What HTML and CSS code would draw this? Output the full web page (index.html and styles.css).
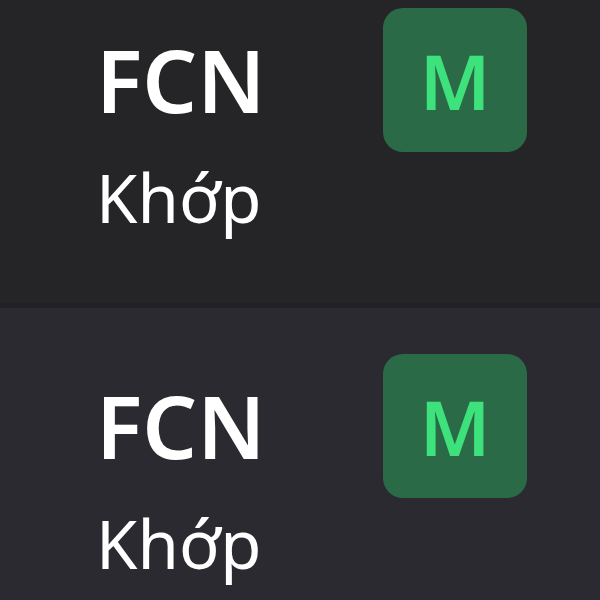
FILE: index.html
```html
<!DOCTYPE html>
<html lang="vi">

<head>
    <meta charset="UTF-8">
    <meta name="viewport" content="width=device-width, initial-scale=1.0">
    <title>Lệnh khớp</title>
    <link rel="stylesheet" href="styles.css">
</head>

<body>
    <div class="order-list">
        <div class="order-row">
            <div class="order-info">
                <div class="symbol">FCN</div>
                <div class="status">Khớp</div>
            </div>
            <div class="side-badge">M</div>
        </div>
        <div class="order-row alt">
            <div class="order-info">
                <div class="symbol">FCN</div>
                <div class="status">Khớp</div>
            </div>
            <div class="side-badge">M</div>
        </div>
    </div>
</body>

</html>
```

FILE: styles.css
```css
body {
    margin: 0;
    height: 100vh;
    overflow: hidden;
    background-color: #2a2a30;
    font-family: "Noto Sans", "Open Sans", sans-serif;
    color: #ffffff;
}

.order-list {
    margin-top: -38px;
}

.order-row {
    display: flex;
    align-items: flex-start;
    height: 341px;
    padding-left: 96px;
    background-color: #252527;
    border-bottom: 5px solid #222226;
}

.order-row.alt {
    background-color: #2a2a30;
}

.order-info {
    width: 287px;
    padding-top: 75px;
}

.symbol {
    font-size: 86px;
    font-weight: 600;
    line-height: 86px;
}

.status {
    margin-top: 40px;
    font-size: 67px;
    line-height: 68px;
}

.side-badge {
    margin-top: 46px;
    width: 144px;
    height: 144px;
    border-radius: 20px;
    background-color: #2b6a47;
    color: #3ee27c;
    font-size: 76px;
    font-weight: 600;
    display: flex;
    justify-content: center;
    align-items: center;
}
```
